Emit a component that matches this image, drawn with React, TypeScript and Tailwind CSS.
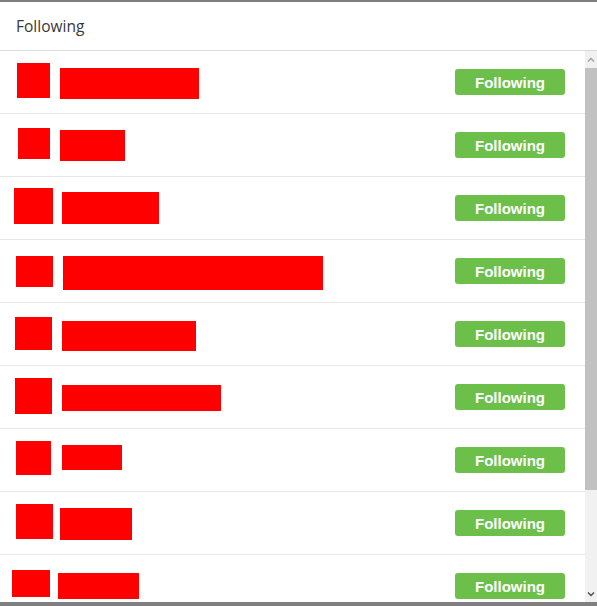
const ROWS = [
	{ avatar: "ml-[17px] mt-[12px] w-[33px] h-[35px]", name: "ml-[10px] mt-[17px] w-[139px] h-[31px]" },
	{ avatar: "ml-[18px] mt-[14px] w-[32px] h-[31px]", name: "ml-[10px] mt-[16px] w-[65px] h-[31px]" },
	{ avatar: "ml-[14px] mt-[11px] w-[39px] h-[36px]", name: "ml-[9px] mt-[15px] w-[97px] h-[32px]" },
	{ avatar: "ml-[16px] mt-[16px] w-[37px] h-[31px]", name: "ml-[10px] mt-[16px] w-[260px] h-[34px]" },
	{ avatar: "ml-[15px] mt-[14px] w-[37px] h-[33px]", name: "ml-[10px] mt-[18px] w-[134px] h-[30px]" },
	{ avatar: "ml-[15px] mt-[12px] w-[37px] h-[36px]", name: "ml-[10px] mt-[19px] w-[159px] h-[26px]" },
	{ avatar: "ml-[16px] mt-[12px] w-[35px] h-[34px]", name: "ml-[11px] mt-[16px] w-[60px] h-[25px]" },
	{ avatar: "ml-[16px] mt-[12px] w-[37px] h-[35px]", name: "ml-[7px] mt-[16px] w-[72px] h-[32px]" },
	{ avatar: "ml-[12px] mt-[15px] w-[38px] h-[27px]", name: "ml-[8px] mt-[18px] w-[81px] h-[26px]" },
];

export default function App() {
	return (
		<div className="w-[597px] h-[606px] flex flex-col bg-white overflow-hidden" style={{ fontFamily: '"Open Sans", sans-serif' }}>
			<div className="h-[2px] bg-[#7f7f7f] shrink-0" />
			<div className="h-[49px] shrink-0 flex items-center px-4 border-b border-[#d9d9d9]">
				<h2 className="text-[15.5px] text-[#383838] mt-[2px]">Following</h2>
			</div>
			<div className="flex flex-1 min-h-0">
				<div className="flex-1 overflow-hidden">
					{ROWS.map((row, i) => (
						<div key={i} className="h-[63px] shrink-0 flex items-start border-b border-[#e8e8e8]">
							<div className={`bg-[#ff0000] shrink-0 ${row.avatar}`} />
							<div className={`bg-[#ff0000] shrink-0 ${row.name}`} />
							<button
								type="button"
								className="ml-auto mr-[20px] self-center w-[110px] h-[26px] rounded-[3px] bg-[#6cc04a] text-white text-[15px] font-bold leading-none"
								style={{ fontFamily: '"Liberation Sans", Arial, sans-serif' }}
							>
								Following
							</button>
						</div>
					))}
				</div>
				<div className="w-[12px] shrink-0 bg-[#f1f1f1] flex flex-col">
					<div className="h-[17px] flex items-center justify-center">
						<svg className="w-[8px] h-[8px] text-[#a3a3a3]" viewBox="0 0 8 8" fill="none" stroke="currentColor" strokeWidth={1.5}>
							<path d="M1 5.5L4 2.5L7 5.5" />
						</svg>
					</div>
					<div className="h-[422px] bg-[#c1c1c1]" />
					<div className="flex-1" />
					<div className="h-[17px] flex items-center justify-center">
						<svg className="w-[8px] h-[8px] text-[#505050]" viewBox="0 0 8 8" fill="none" stroke="currentColor" strokeWidth={1.5}>
							<path d="M1 2.5L4 5.5L7 2.5" />
						</svg>
					</div>
				</div>
			</div>
			<div className="h-[4px] bg-[#7f7f7f] shrink-0" />
		</div>
	);
}
